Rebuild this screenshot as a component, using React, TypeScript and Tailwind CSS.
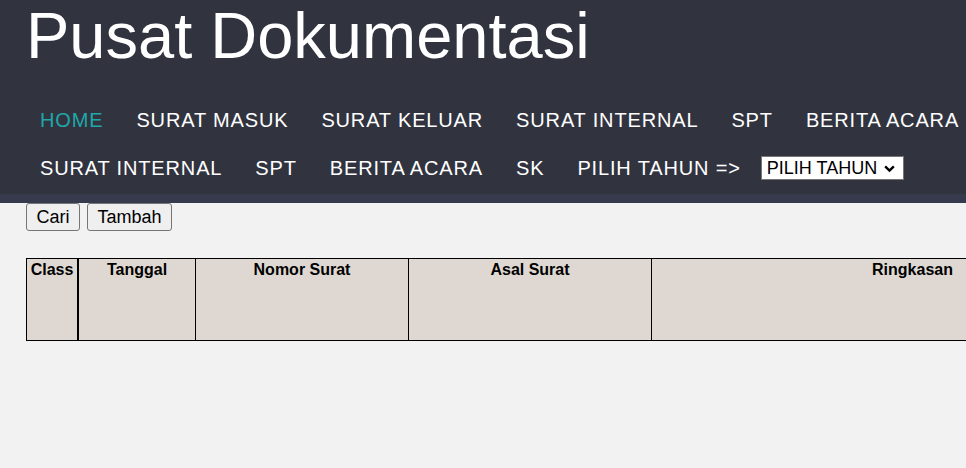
import React from "react";

const rowOne = ["SURAT MASUK", "SURAT KELUAR", "SURAT INTERNAL", "SPT", "BERITA ACARA"];
const rowTwo = ["SURAT INTERNAL", "SPT", "BERITA ACARA", "SK"];

const columns = [
  { label: "Class", width: "w-[52px]", border: "border-r-2" },
  { label: "Tanggal", width: "w-[117px]", border: "border-r" },
  { label: "Nomor Surat", width: "w-[213px]", border: "border-r" },
  { label: "Asal Surat", width: "w-[243px]", border: "border-r" },
  { label: "Ringkasan", width: "w-[522px]", border: "border-r" },
];

export default function App() {
  return (
    <div className="min-h-[468px] w-[966px] overflow-hidden bg-[#f2f2f2] font-['Liberation_Sans',Arial,sans-serif]">
      {/* Header */}
      <header className="bg-[#31343f]">
        <h1 className="mb-[24px] pl-[26px] text-[65px] leading-[72px] text-white">Pusat Dokumentasi</h1>

        <nav className="pl-[40px] text-[20px] tracking-[0.85px] text-white">
          <div className="flex h-[48px] items-center gap-x-[33px] whitespace-nowrap">
            <a href="#" className="text-[#1fa7a9]">HOME</a>
            {rowOne.map((item, i) => (
              <a key={i} href="#">{item}</a>
            ))}
          </div>
          <div className="flex h-[48px] items-center gap-x-[33px] whitespace-nowrap">
            {rowTwo.map((item, i) => (
              <a key={i} href="#">{item}</a>
            ))}
            <span className="flex items-center gap-x-[20px]">
              PILIH TAHUN =&gt;
              <span className="flex h-[24px] w-[143px] items-center justify-between border border-[#767676] bg-white pl-[5px] pr-[7px] text-[18px] tracking-normal text-black">
                PILIH TAHUN
                <svg className="h-[13px] w-[13px]" viewBox="0 0 12 12" fill="none" stroke="currentColor" strokeWidth={2.2}>
                  <path d="M2 4l4 4 4-4" />
                </svg>
              </span>
            </span>
          </div>
        </nav>
        <div className="mt-[2px] h-[9px] bg-[#373a4c]"></div>
      </header>

      {/* Actions */}
      <div className="flex gap-x-[7px] pl-[26px]">
        <button className="h-[28px] rounded-[3px] border border-[#767676] bg-[#efefef] px-[9.5px] text-[18px] text-black">Cari</button>
        <button className="h-[28px] rounded-[3px] border border-[#767676] bg-[#efefef] px-[9.5px] text-[18px] text-black">Tambah</button>
      </div>

      {/* Table */}
      <div className="mt-[27px] pl-[26px]">
        <div className="flex h-[83px] w-max border border-black bg-[#dfd8d2]">
          {columns.map((col) => (
            <div key={col.label} className={`${col.width} ${col.border} shrink-0 border-black px-[3px] pt-[2px] text-center text-[16px] font-bold leading-[18px] text-black`}>
              {col.label}
            </div>
          ))}
        </div>
      </div>
    </div>
  );
}
